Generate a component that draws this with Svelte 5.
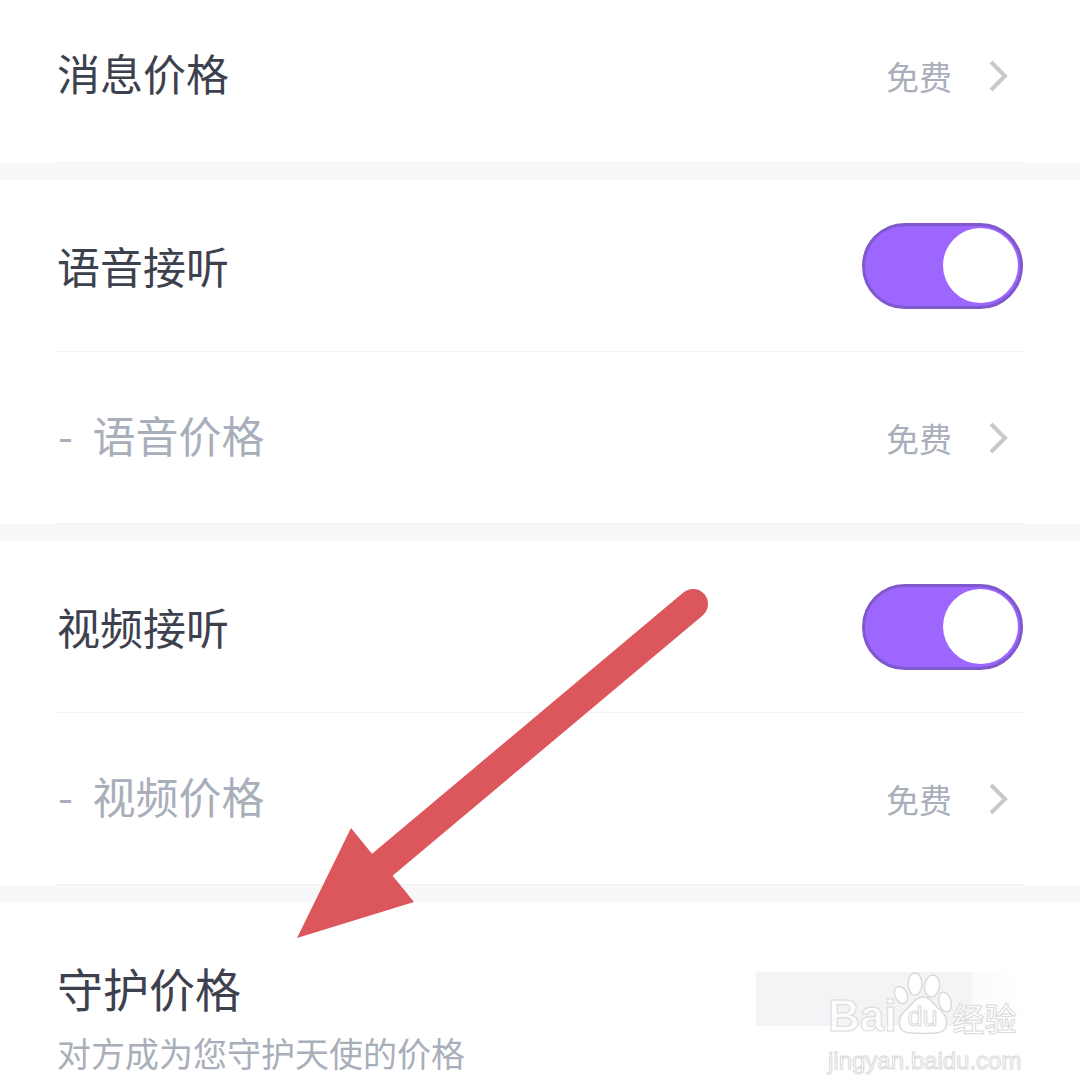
<script>
	const sections = [
		[{ label: '消息价格', value: '免费', cls: 'first' }],
		[
			{ label: '语音接听', on: true },
			{ label: '- 语音价格', value: '免费', sub: true }
		],
		[
			{ label: '视频接听', on: true },
			{ label: '- 视频价格', value: '免费', sub: true }
		]
	]
</script>

<div class="page">
	{#each sections as rows}
		<section class="group">
			{#each rows as row}
				<div class="row {row.cls || ''}" class:sub={row.sub} class:has-toggle={row.on}>
					<span class="label">{row.label}</span>
					{#if row.on}
						<span class="toggle"><span class="knob"></span></span>
					{:else}
						<span class="value">
							{row.value}
							<svg class="chev" width="24" height="36" viewBox="0 0 24 36">
								<polyline points="5,4 19,18 5,32" />
							</svg>
						</span>
					{/if}
				</div>
			{/each}
		</section>
	{/each}

	<section class="guard">
		<div class="guard-text">
			<div class="guard-title">守护价格</div>
			<div class="guard-desc">对方成为您守护天使的价格</div>
		</div>
		<div class="guard-value"></div>
	</section>

	<svg class="arrow" width="1080" height="1088" viewBox="0 0 1080 1088">
		<line x1="693" y1="604" x2="382" y2="865" />
		<polygon points="297,938 351,828 373,855 392,875 414,902" />
	</svg>

	<div class="mark">
		<svg class="paw" width="66" height="64" viewBox="0 0 66 64">
			<ellipse cx="11" cy="23" rx="6" ry="9" transform="rotate(-25 11 23)" />
			<ellipse cx="25" cy="12" rx="7" ry="11" />
			<ellipse cx="42" cy="14" rx="7.5" ry="11" transform="rotate(8 42 14)" />
			<ellipse cx="55" cy="30" rx="6" ry="10" transform="rotate(-15 55 30)" />
			<path d="M33 25C25 25 23 32 16 38C7 45 6 60 20 61C27 61.5 39 61.5 46 61C60 60 59 45 50 38C43 32 41 25 33 25Z" />
		</svg>
		<div class="mark-brand"><span>Bai</span><span class="du">du</span><span class="cn">经验</span></div>
		<div class="mark-url">jingyan.baidu.com</div>
	</div>
</div>

<style>
	:global(body) {
		margin: 0;
		background: #fff;
	}

	.page {
		position: relative;
		width: 1080px;
		height: 1088px;
		overflow: hidden;
		background: #fff;
		font-family: "Noto Sans CJK SC", "Noto Sans", sans-serif;
		color: #3d414e;
	}

	.group {
		border-bottom: 17px solid #f8f8f8;
		box-sizing: border-box;
	}

	.row {
		display: flex;
		align-items: center;
		justify-content: space-between;
		box-sizing: border-box;
		height: 172px;
		margin: 0 56px;
		border-bottom: 1px solid #f1f1f2;
	}

	.row.first {
		height: 163px;
	}

	.row.first .label {
		margin-bottom: 18px;
	}

	.row.first .value {
		margin-bottom: 10px;
	}

	.row.has-toggle .toggle {
		margin: 2px 1px 0 0;
	}

	.row.has-toggle {
		padding-bottom: 2px;
	}

	.row.sub .label {
		margin-bottom: 8px;
		margin-left: 2px;
		color: #a9afba;
		word-spacing: 10px;
	}

	.label {
		margin-left: 1px;
		font-size: 43px;
		line-height: 60px;
	}

	.value {
		display: flex;
		align-items: center;
		gap: 34px;
		margin-right: 14px;
		font-size: 33px;
		color: #a9afba;
	}

	.chev polyline {
		fill: none;
		stroke: #c9c9cb;
		stroke-width: 4;
	}

	.toggle {
		display: flex;
		justify-content: flex-end;
		align-items: center;
		box-sizing: border-box;
		width: 161px;
		height: 86px;
		padding-right: 2px;
		border: 3px solid #7f58cb;
		border-radius: 43px;
		background: #9c66ff;
	}

	.knob {
		width: 75px;
		height: 75px;
		border-radius: 50%;
		background: #fff;
	}

	.guard {
		display: flex;
		justify-content: space-between;
		align-items: flex-start;
		margin: 0 56px 0 57px;
	}

	.guard-title {
		margin-top: 52px;
		font-size: 46px;
		line-height: 66px;
	}

	.guard-desc {
		margin-top: 5px;
		font-size: 34px;
		line-height: 56px;
		color: #a9afba;
	}

	.guard-value {
		width: 268px;
		height: 54px;
		margin-top: 70px;
		background: linear-gradient(90deg, #f3f4f6 80%, #fbfbfc 81%, #fff);
	}

	.arrow {
		position: absolute;
		left: 0;
		top: 0;
	}

	.arrow line {
		stroke: #dc575c;
		stroke-width: 30;
		stroke-linecap: round;
	}

	.arrow polygon {
		fill: #dc575c;
	}

	.mark {
		position: absolute;
		left: 828px;
		top: 972px;
		width: 200px;
		color: rgba(255, 255, 255, 0.75);
		-webkit-text-stroke: 1px #d9dadc;
		font-family: "Liberation Sans", sans-serif;
	}

	.paw {
		position: absolute;
		left: 62px;
		top: 0;
	}

	.paw ellipse,
	.paw path {
		fill: #fff;
		stroke: #d9dadc;
		stroke-width: 1.5;
	}

	.mark-brand {
		position: relative;
		display: flex;
		align-items: baseline;
		margin-top: 22px;
		font-size: 44px;
		font-weight: 700;
		line-height: 44px;
	}

	.du {
		position: relative;
		top: -5px;
		width: 45px;
		margin-left: 11px;
		font-size: 27px;
		font-weight: 400;
	}

	.cn {
		font-family: "Noto Sans CJK SC", sans-serif;
		font-size: 32px;
		font-weight: 500;
	}

	.mark-url {
		position: relative;
		margin-top: 3px;
		font-size: 24px;
		line-height: 28px;
		white-space: nowrap;
	}
</style>
